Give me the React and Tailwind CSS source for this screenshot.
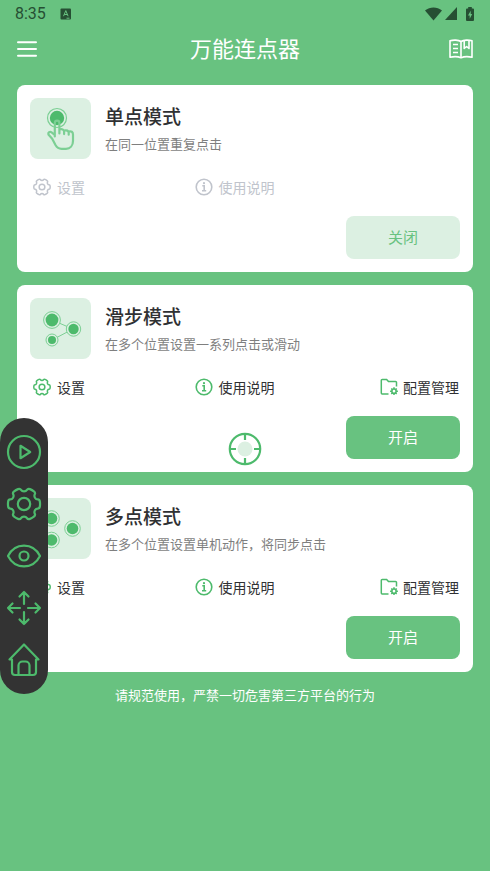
import clsx from "clsx";

// Rounded six-tooth gear outline around (c, c)
const gearPath = (c, outer, inner) => {
  const pts = [];
  for (let i = 0; i < 6; i++) {
    [
      [-16, outer],
      [0, outer],
      [16, outer],
      [21, inner],
      [39, inner],
    ].forEach(([deg, r]) => {
      const a = ((i * 60 + deg) * Math.PI) / 180;
      pts.push([c + r * Math.cos(a), c + r * Math.sin(a)]);
    });
  }
  const mid = (p, q) => `${((p[0] + q[0]) / 2).toFixed(2)} ${((p[1] + q[1]) / 2).toFixed(2)}`;
  let d = `M${mid(pts[pts.length - 1], pts[0])}`;
  pts.forEach((p, i) => {
    d += `Q${p[0].toFixed(2)} ${p[1].toFixed(2)} ${mid(p, pts[(i + 1) % pts.length])}`;
  });
  return d + "Z";
};

const GearIcon = ({ className, strokeWidth = 2 }) => (
  <svg viewBox="0 0 34 34" className={className} fill="none" stroke="currentColor" strokeWidth={strokeWidth}>
    <path d={gearPath(17, 15.6, 12.4)} />
    <circle cx="17" cy="17" r="5.4" />
  </svg>
);

const InfoIcon = ({ className }) => (
  <svg viewBox="0 0 18 18" className={className} fill="none" stroke="currentColor" strokeWidth="1.6">
    <circle cx="9" cy="9" r="7.8" />
    <path d="M7.3 7.7h1.9v5M7 12.8h4.2" />
    <circle cx="9" cy="5.2" r="1.1" fill="currentColor" stroke="none" />
  </svg>
);

const FolderGearIcon = ({ className }) => (
  <svg viewBox="0 0 18 18" className={className} fill="none" stroke="currentColor" strokeWidth="1.5">
    <path d="M8.5 16H2.2a.9.9 0 0 1-.9-.9V2.3a.9.9 0 0 1 .9-.9h4.4l1.9 2.2h7.1a.9.9 0 0 1 .9.9v4" />
    <circle cx="14" cy="13.2" r="2.1" />
    <path d="M14 9.3v1.8M14 15.3v1.8M10.1 13.2h1.8M16.1 13.2h1.8M11.3 10.5l1.2 1.2M15.5 14.7l1.2 1.2M16.7 10.5l-1.2 1.2M12.5 14.7l-1.2 1.2" />
  </svg>
);

const TapIcon = () => (
  <svg viewBox="0 0 61 61" className="size-full" fill="none">
    <circle cx="27" cy="20" r="9.5" stroke="#7ccf94" strokeWidth="1.2" />
    <circle cx="27" cy="20" r="7.2" fill="#4dba6c" />
    <path
      d="M24.8 38.500V25a2.300 2.300 0 0 1 4.600 0v10.500M29.400 31.500c2.600-.8 4.700 0 4.700 2v2.600M34.100 32.500c2.600-.6 4.600.2 4.600 2.200v2M38.700 33.500c2.600-.7 4.300.4 4.300 3v6.500c0 4.500-2.800 7.800-7 7.800h-4.500c-3 0-4.500-1.200-6-3.800l-3.300-6.300-3.800-4.200c-.7-2 1.500-3.300 3.200-2.200l3.200 2.700"
      stroke="#7ccf94"
      strokeWidth="2.2"
      strokeLinecap="round"
      strokeLinejoin="round"
    />
  </svg>
);

const Dot = ({ x, y, r }) => (
  <>
    <circle cx={x} cy={y} r={r} fill="#dcf0e2" stroke="#7ccf94" />
    <circle cx={x} cy={y} r={r - 2} fill="#4dba6c" />
  </>
);

const SwipeIcon = () => (
  <svg viewBox="0 0 61 61" className="size-full" fill="none">
    <path d="M22 22l21 9-21 11" stroke="#7ccf94" />
    <Dot x={22} y={22} r={8.4} />
    <Dot x={43.5} y={31} r={7.2} />
    <Dot x={22} y={42} r={6} />
  </svg>
);

const MultiIcon = () => (
  <svg viewBox="0 0 61 61" className="size-full" fill="none">
    <Dot x={21.5} y={20.5} r={7.8} />
    <Dot x={42.500} y={30.500} r={7.800} />
    <Dot x={21.5} y={42} r={7.8} />
  </svg>
);

const modes = [
  { id: "single", title: "单点模式", desc: "在同一位置重复点击", Icon: TapIcon, active: true },
  { id: "swipe", title: "滑步模式", desc: "在多个位置设置一系列点击或滑动", Icon: SwipeIcon },
  { id: "multi", title: "多点模式", desc: "在多个位置设置单机动作，将同步点击", Icon: MultiIcon },
];

const ModeCard = ({ title, desc, Icon, active }) => (
  <section className="rounded-lg bg-white p-[13px]">
    <div className="flex items-center gap-[14px]">
      <div className="size-[61px] shrink-0 rounded-lg bg-[#dcf0e2]">
        <Icon />
      </div>
      <div className="pb-0.5">
        <h2 className="text-[19px] leading-7 font-medium text-[#303133]">{title}</h2>
        <p className="mt-1 text-[13px] leading-5 text-[#7f7f7f]">{desc}</p>
      </div>
    </div>

    <div
      className={clsx(
        "mt-[18px] grid grid-cols-[38%_1fr_auto] text-sm leading-5",
        active ? "text-[#c0c4cc]" : "text-[#303133]"
      )}
    >
      <button type="button" disabled={active} className="flex items-center gap-1.5 pl-[3px]">
        <GearIcon strokeWidth={2.8} className={clsx("size-[18px]", !active && "text-[#4dba6c]")} />
        设置
      </button>
      <button type="button" disabled={active} className="flex items-center gap-[5px] pl-0.5">
        <InfoIcon className={clsx("size-[18px]", !active && "text-[#4dba6c]")} />
        使用说明
      </button>
      {!active && (
        <button type="button" className="flex items-center gap-[5px] pr-px">
          <FolderGearIcon className="size-[18px] text-[#4dba6c]" />
          配置管理
        </button>
      )}
    </div>

    <div className="mt-[19px] flex justify-end">
      <button
        type="button"
        className={clsx(
          "h-[43px] w-[114px] rounded-lg text-[15px]",
          active ? "bg-[#dcf0e2] text-[#68c280]" : "bg-[#68c280] text-white"
        )}
      >
        {active ? "关闭" : "开启"}
      </button>
    </div>
  </section>
);

const StatusBar = () => (
  <div className="flex h-[27px] items-center justify-between pr-4 pl-[15px] text-[#264f33]">
    <div className="flex items-center gap-[14px]">
      <span className="font-[Roboto] text-base">8:35</span>
      <svg viewBox="0 0 12 12" className="size-3">
        <rect x="0.500" y="0.500" width="10.500" height="11" rx="1" fill="currentColor" />
        <path d="M3.500 8.200L5.800 2.600l2.300 5.600M4.300 6.500h3M6.500 10.200h3" fill="none" stroke="#68c280" />
      </svg>
    </div>
    <div className="flex items-center gap-[3px]">
      <svg viewBox="0 0 17 14" className="h-[14px] w-[17px]" fill="currentColor">
        <path d="M0 3.500C5 -.6 12 -.6 17 3.500L8.500 13.500z" />
      </svg>
      <svg viewBox="0 0 12 13" className="h-[13px] w-3" fill="currentColor">
        <path d="M12 0v13H0z" />
      </svg>
      <svg viewBox="0 0 8 14" className="ml-1.5 h-[14px] w-2">
        <path d="M2.200 0h3.600v1.500H7a1 1 0 0 1 1 1V13a1 1 0 0 1-1 1H1a1 1 0 0 1-1-1V2.500a1 1 0 0 1 1-1h1.200z" fill="currentColor" />
        <path d="M4.700 3.800L2 8.500h1.700v3.200L6.200 7H4.700z" fill="#68c280" />
      </svg>
    </div>
  </div>
);

const Header = () => (
  <header className="flex h-[43px] items-center justify-between px-[17px] text-white">
    <button type="button" aria-label="菜单" className="w-6">
      <svg viewBox="0 0 20 16" className="h-4 w-5" stroke="currentColor" strokeWidth="2" strokeLinecap="round">
        <path d="M1 1.200h18M1 8h18M1 14.800h18" />
      </svg>
    </button>
    <h1 className="pb-[3px] text-[22px] leading-8">万能连点器</h1>
    <button type="button" aria-label="使用教程">
      <svg viewBox="0 0 24 20" className="h-5 w-6" fill="none" stroke="currentColor" strokeWidth="1.6" strokeLinejoin="round">
        <path d="M12 2.500C9.500.8 4 .8 1 1.800v16.400c3.500-.8 8-.8 11 .6 3-1.400 7.500-1.400 11-.6V1.800c-3-1-8.500-1-11 .7z" />
        <path d="M12 2.500v16.300M4 5.500h5M4 9.500h5M4 13.500h5M15.200 2v7.500l2.400-2 2.400 2V2" />
      </svg>
    </button>
  </header>
);

const tools = [
  {
    label: "播放",
    icon: (
      <>
        <circle cx="17" cy="17" r="16" />
        <path d="M13.500 10.800v12.400L23.200 17z" />
      </>
    ),
  },
  {
    label: "设置",
    icon: (
      <>
        <path d={gearPath(17, 16.2, 12.8)} />
        <circle cx="17" cy="17" r="6.2" />
      </>
    ),
  },
  {
    label: "显示",
    icon: (
      <>
        <path d="M1 17C8 3.200 26 3.200 33 17C26 30.800 8 30.800 1 17z" />
        <circle cx="17" cy="17" r="4.5" />
      </>
    ),
  },
  {
    label: "移动",
    icon: (
      <path d="M17 13V1M12.500 5.500L17 1l4.500 4.500M17 21v12M12.500 28.500L17 33l4.500-4.500M13 17H1M5.500 12.500L1 17l4.500 4.500M21 17h12M28.500 12.500L33 17l-4.500 4.500" />
    ),
  },
  {
    label: "主页",
    icon: (
      <>
        <path d="M5 16.500H2.500L17 1.500l14.500 15H29v12.500a3 3 0 0 1-3 3H8a3 3 0 0 1-3-3z" />
        <path d="M11.500 32V22.500a4 4 0 0 1 4-4h3a4 4 0 0 1 4 4V32" />
      </>
    ),
  },
];

// Floating control panel docked to the left edge of the screen
const FloatingToolbar = () => (
  <nav className="absolute top-[418px] left-0 flex flex-col gap-[18px] rounded-full bg-[#333333] px-[7px] py-[17px] text-[#4dba6c]">
    {tools.map(({ label, icon }) => (
      <button key={label} type="button" aria-label={label}>
        <svg
          viewBox="0 0 34 34"
          className="size-[34px] overflow-visible"
          fill="none"
          stroke="currentColor"
          strokeWidth="2.2"
          strokeLinecap="round"
          strokeLinejoin="round"
        >
          {icon}
        </svg>
      </button>
    ))}
  </nav>
);

const TargetMarker = () => (
  <svg
    viewBox="0 0 34 34"
    className="absolute top-[432px] left-1/2 size-[34px] -translate-x-1/2"
    fill="none"
    stroke="#4dba6c"
    strokeWidth="2.2"
  >
    <circle cx="17" cy="17" r="15.2" />
    <circle cx="17" cy="17" r="7.5" fill="#dcf0e2" stroke="none" />
    <path d="M17 2v6M17 26v6M2 17h6M26 17h6" />
  </svg>
);

const App = () => {
  return (
    <div className="relative min-h-screen bg-[#68c280] font-['Noto_Sans_CJK_SC',sans-serif]">
      <StatusBar />
      <Header />
      <main className="flex flex-col gap-[13px] px-[17px] pt-[15px]">
        {modes.map(({ id, ...mode }) => (
          <ModeCard key={id} {...mode} />
        ))}
        <p className="text-center text-[13px] leading-5 text-white">请规范使用，严禁一切危害第三方平台的行为</p>
      </main>
      <TargetMarker />
      <FloatingToolbar />
    </div>
  );
};

export default App;
